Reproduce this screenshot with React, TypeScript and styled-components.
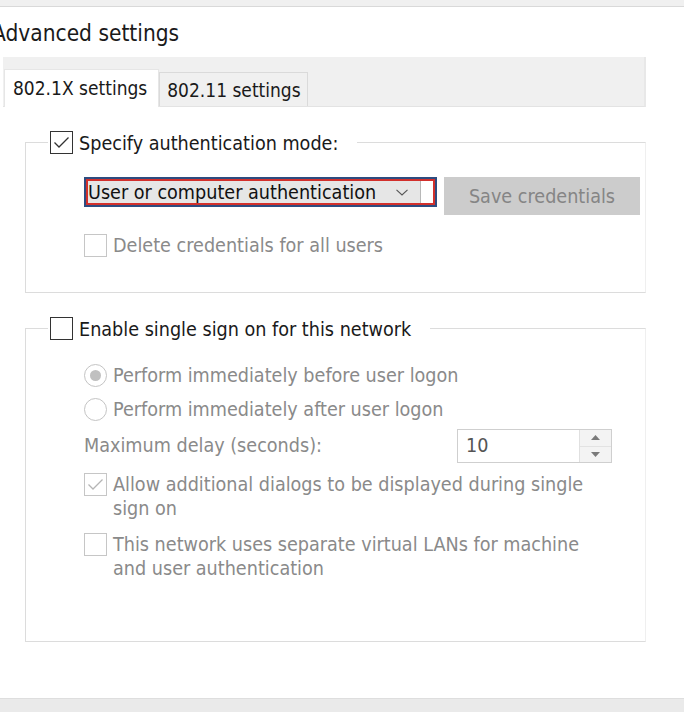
import React from "react";
import styled, { createGlobalStyle } from "styled-components";

const Global = createGlobalStyle`
  html, body { margin: 0; padding: 0; background: #ffffff; }
  body { font-family: "DejaVu Sans Condensed", "DejaVu Sans", "Liberation Sans", sans-serif; }
  * { box-sizing: border-box; }
`;

const FONT = `"DejaVu Sans Condensed", "DejaVu Sans", "Liberation Sans", sans-serif`;
const TEXT_SIZE = "19.6px";

const Window = styled.div`
  width: 684px;
  height: 712px;
  display: flex;
  flex-direction: column;
  overflow: hidden;
  background: #ffffff;
  font-family: ${FONT};
  color: #1a1a1a;
`;

const TopBar = styled.div`
  height: 7px;
  flex: 0 0 7px;
  background: #f0f0f0;
  border-bottom: 1px solid #d9d9d9;
`;

const Title = styled.h1`
  margin: 0 0 0 -8px;
  height: 50px;
  flex: 0 0 50px;
  display: flex;
  align-items: center;
  padding-top: 1px;
  font-size: 22.5px;
  font-weight: normal;
  color: #1a1a1a;
  white-space: nowrap;
`;

const TabStrip = styled.div`
  flex: 0 0 50px;
  height: 50px;
  margin: 0 38px 0 3px;
  background: #f0f0f0;
  border-right: 2px solid #e8e8e8;
  border-bottom: 1px solid #e3e3e3;
  display: flex;
  align-items: flex-end;
  padding-left: 1px;
`;

const Tab = styled.div<{ $active?: boolean }>`
  height: ${(p) => (p.$active ? "38px" : "34px")};
  padding: ${(p) => (p.$active ? "0 11px 2px 8px" : "1px 6px 0 7px")};
  display: flex;
  align-items: center;
  font-size: 19px;
  color: #1a1a1a;
  background: ${(p) => (p.$active ? "#ffffff" : "#f0f0f0")};
  border: 1px solid ${(p) => (p.$active ? "#e6e6e6" : "#dadada")};
  border-bottom: none;
  margin-bottom: ${(p) => (p.$active ? "-1px" : "0")};
  white-space: nowrap;
`;

const Panel = styled.div`
  flex: 1 1 auto;
  padding: 23px 38px 0 25px;
  display: flex;
  flex-direction: column;
  gap: 23px;
`;

const Group = styled.fieldset<{ $padBottom: number }>`
  margin: 0;
  min-width: 0;
  border: 1px solid #dcdcdc;
  border-right-color: #efefef;
  padding: 0 0 ${(p) => p.$padBottom}px 22px;
  display: flex;
  flex-direction: column;
`;

const Legend = styled.legend`
  padding: 0 19px 0 2px;
  height: 24px;
  display: flex;
  align-items: center;
  gap: 6px;
  font-size: ${TEXT_SIZE};
  line-height: 24px;
  color: #1a1a1a;
  white-space: nowrap;
`;

const LegendText = styled.span`
  line-height: 26px;
  height: 24px;
  padding-top: 1px;
`;

const Body = styled.div`
  margin-left: 36px;
  display: flex;
  flex-direction: column;
`;

const Row = styled.div<{ $mt: number }>`
  margin-top: ${(p) => p.$mt}px;
  display: flex;
  align-items: flex-start;
`;

const Option = styled.label<{ $mt: number; $disabled?: boolean }>`
  margin-top: ${(p) => p.$mt}px;
  display: flex;
  align-items: flex-start;
  gap: 6px;
  font-size: ${TEXT_SIZE};
  line-height: 24px;
  color: ${(p) => (p.$disabled ? "#8a8a8a" : "#1a1a1a")};
`;

const OptionText = styled.span`
  max-width: 495px;
`;

const Box = styled.span<{ $disabled?: boolean }>`
  flex: 0 0 23px;
  width: 23px;
  height: 23px;
  border: 1px solid ${(p) => (p.$disabled ? "#c6c6c6" : "#333333")};
  background: #ffffff;
  display: flex;
  align-items: center;
  justify-content: center;
`;

const Radio = styled.span<{ $checked?: boolean }>`
  flex: 0 0 23px;
  width: 23px;
  height: 23px;
  border-radius: 50%;
  border: 1px solid #c4c4c4;
  background: #ffffff;
  display: flex;
  align-items: center;
  justify-content: center;
  &::after {
    content: "";
    width: 11px;
    height: 11px;
    border-radius: 50%;
    background: ${(p) => (p.$checked ? "#c0c0c0" : "transparent")};
  }
`;

const DropOuter = styled.div`
  width: 353px;
  height: 30px;
  border: 2px solid #2e4c80;
  flex: 0 0 353px;
`;

const DropInner = styled.div`
  height: 100%;
  border: 2px solid #d2302c;
  display: flex;
`;

const DropFace = styled.div`
  flex: 1 1 auto;
  background: #e6e6e6;
  display: flex;
  align-items: center;
  justify-content: space-between;
  padding: 0 12px 0 0;
  font-size: ${TEXT_SIZE};
  color: #111111;
  white-space: nowrap;
`;

const DropTail = styled.div`
  flex: 0 0 13px;
  background: #ffffff;
  border-left: 1px solid #b8b8b8;
`;

const SaveButton = styled.button`
  margin-left: 7px;
  width: 196px;
  height: 38px;
  border: none;
  background: #cccccc;
  color: #858585;
  font-family: ${FONT};
  font-size: ${TEXT_SIZE};
  padding: 0;
`;

const DelayLabel = styled.span`
  flex: 0 0 373px;
  font-size: ${TEXT_SIZE};
  line-height: 34px;
  color: #8a8a8a;
`;

const Spin = styled.div`
  width: 155px;
  height: 34px;
  border: 1px solid #cfcfcf;
  display: flex;
  background: #ffffff;
`;

const SpinValue = styled.span`
  flex: 1 1 auto;
  padding-left: 8px;
  font-size: ${TEXT_SIZE};
  line-height: 32px;
  color: #555555;
`;

const SpinButtons = styled.div`
  flex: 0 0 32px;
  display: flex;
  flex-direction: column;
  border-left: 1px solid #e0e0e0;
`;

const SpinBtn = styled.div`
  flex: 1 1 0;
  display: flex;
  align-items: center;
  justify-content: center;
  background: #f3f3f3;
  & + & { border-top: 1px solid #e2e2e2; }
`;

const BottomBar = styled.div`
  flex: 0 0 14px;
  height: 14px;
  background: #eaeaea;
  border-top: 1px solid #dedede;
`;

const CheckMark = ({ color }: { color: string }) => (
  <svg width="17" height="13" viewBox="0 0 17 13">
    <polyline points="1.5,6.5 6,11 15.5,1.5" fill="none" stroke={color} strokeWidth="1.3" />
  </svg>
);

const Chevron = () => (
  <svg width="12" height="7" viewBox="0 0 12 7">
    <polyline points="0.5,0.8 6,6 11.5,0.8" fill="none" stroke="#555" strokeWidth="1.1" />
  </svg>
);

const Tri = ({ up }: { up?: boolean }) => (
  <svg width="9" height="5" viewBox="0 0 9 5">
    <polygon points={up ? "0,5 4.5,0 9,5" : "0,0 4.5,5 9,0"} fill="#7a7a7a" />
  </svg>
);

export default function App() {
  return (
    <>
      <Global />
      <Window>
        <TopBar />
        <Title>Advanced settings</Title>
        <TabStrip>
          <Tab $active>802.1X settings</Tab>
          <Tab>802.11 settings</Tab>
        </TabStrip>
        <Panel>
          <Group $padBottom={34}>
            <Legend>
              <Box>
                <CheckMark color="#333" />
              </Box>
              <LegendText>Specify authentication mode:</LegendText>
            </Legend>
            <Body>
              <Row $mt={23}>
                <DropOuter>
                  <DropInner>
                    <DropFace>
                      User or computer authentication
                      <Chevron />
                    </DropFace>
                    <DropTail />
                  </DropInner>
                </DropOuter>
                <SaveButton disabled>Save credentials</SaveButton>
              </Row>
              <Option $mt={19} $disabled>
                <Box $disabled />
                <OptionText>Delete credentials for all users</OptionText>
              </Option>
            </Body>
          </Group>
          <Group $padBottom={60}>
            <Legend>
              <Box />
              <LegendText>Enable single sign on for this network</LegendText>
            </Legend>
            <Body>
              <Option $mt={24} $disabled>
                <Radio $checked />
                <OptionText>Perform immediately before user logon</OptionText>
              </Option>
              <Option $mt={10} $disabled>
                <Radio />
                <OptionText>Perform immediately after user logon</OptionText>
              </Option>
              <Row $mt={7}>
                <DelayLabel>Maximum delay (seconds):</DelayLabel>
                <Spin>
                  <SpinValue>10</SpinValue>
                  <SpinButtons>
                    <SpinBtn>
                      <Tri up />
                    </SpinBtn>
                    <SpinBtn>
                      <Tri />
                    </SpinBtn>
                  </SpinButtons>
                </Spin>
              </Row>
              <Option $mt={10} $disabled>
                <Box $disabled>
                  <CheckMark color="#b5b5b5" />
                </Box>
                <OptionText>Allow additional dialogs to be displayed during single sign on</OptionText>
              </Option>
              <Option $mt={12} $disabled>
                <Box $disabled />
                <OptionText>This network uses separate virtual LANs for machine and user authentication</OptionText>
              </Option>
            </Body>
          </Group>
        </Panel>
        <BottomBar />
      </Window>
    </>
  );
}
